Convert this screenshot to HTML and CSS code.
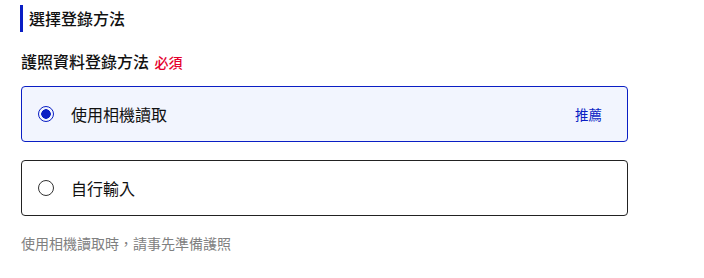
FILE: index.html
```html
<!DOCTYPE html>
<html lang="zh-Hant">
<head>
    <meta charset="UTF-8">
    <meta name="viewport" content="width=device-width, initial-scale=1.0">
    <title>選擇登錄方法</title>
    <link rel="stylesheet" href="styles.css">
</head>
<body>
    <div class="section">
        <h2 class="section-title">選擇登錄方法</h2>

        <div class="field-label">護照資料登錄方法 <span class="required">必須</span></div>

        <div class="options">
            <label class="option selected">
                <span class="radio"></span>
                <span class="option-text">使用相機讀取</span>
                <span class="badge">推薦</span>
            </label>
            <label class="option">
                <span class="radio"></span>
                <span class="option-text">自行輸入</span>
            </label>
        </div>

        <p class="note">使用相機讀取時，請事先準備護照</p>
    </div>
</body>
</html>
```

FILE: styles.css
```css
/* Global Styles */
body {
    margin: 0;
    font-family: "Noto Sans CJK TC", "Noto Sans", sans-serif;
    background-color: #FFFFFF;
    color: #111111;
}

.section {
    width: 607px;
    padding: 5px 0 0 21px;
}

/* Heading */
.section-title {
    margin: 0 0 0 -1px;
    padding-left: 6px;
    border-left: 3px solid #0a1ec4;
    font-size: 16px;
    font-weight: 500;
    line-height: 27px;
}

.field-label {
    margin-top: 17px;
    font-size: 16px;
    font-weight: 500;
    line-height: 24px;
}

.required {
    margin-left: 2px;
    font-size: 14px;
    color: #e5002d;
}

/* Options */
.options {
    display: flex;
    flex-direction: column;
    gap: 18px;
    margin-top: 12px;
}

.option {
    display: flex;
    align-items: center;
    height: 54px;
    padding: 0 25px 0 16px;
    border: 1px solid #222222;
    border-radius: 4px;
    cursor: pointer;
}

.option.selected {
    border-color: #0a1ec4;
    background-color: #f2f5fe;
}

.radio {
    box-sizing: border-box;
    width: 16px;
    height: 16px;
    border: 1.5px solid #333333;
    border-radius: 50%;
    flex-shrink: 0;
}

.option.selected .radio {
    border-color: #0a1ec4;
    background: radial-gradient(circle, #0a1ec4 0 4.5px, transparent 5px);
}

.option-text {
    margin-left: 17px;
    font-size: 16px;
}

.badge {
    margin-left: auto;
    font-size: 13.5px;
    color: #0a1ec4;
}

.note {
    margin: 17px 0 0;
    font-size: 14px;
    line-height: 20px;
    color: #808080;
}
```
